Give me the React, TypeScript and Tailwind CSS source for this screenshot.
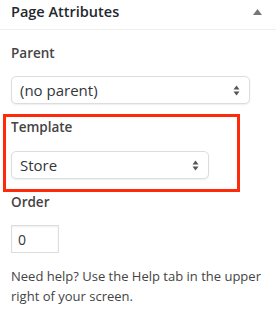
import React from "react";

function Arrows() {
  return (
    <svg width="7" height="11" viewBox="0 0 7 11" className="shrink-0">
      <path d="M3.5 0.5 L6.5 4.5 L0.5 4.5 Z" fill="#555" />
      <path d="M3.5 10.5 L6.5 6.5 L0.5 6.5 Z" fill="#555" />
    </svg>
  );
}

function Select({ label, width }: { label: string; width: string }) {
  return (
    <div
      className={`${width} h-[28px] flex items-center justify-between pl-[8px] pr-[9px] border border-[#dddddd] rounded-[5px] bg-white shadow-[0_1px_2px_rgba(0,0,0,0.07)] text-[15px] text-[#32373c]`}
    >
      <span>{label}</span>
      <Arrows />
    </div>
  );
}

export default function App() {
  return (
    <div
      className="w-[276px] h-[317px] bg-white text-[#23282d] overflow-hidden"
      style={{ fontFamily: '"Open Sans", sans-serif' }}
    >
      <div className="h-[30px] border-b border-[#eeeeee] flex items-center justify-between pl-[11px] pr-[14px]">
        <h2 className="text-[14.5px] font-semibold leading-none -mt-[5px]">Page Attributes</h2>
        <svg width="9" height="6" viewBox="0 0 9 6" className="-mt-[6px]">
          <path d="M4.5 0 L9 6 L0 6 Z" fill="#777" />
        </svg>
      </div>

      <div className="pl-[11px] pt-[14px]">
        <p className="text-[13.5px] font-semibold text-[#444] leading-[18px]">Parent</p>
        <div className="mt-[14px]">
          <Select label="(no parent)" width="w-[239px]" />
        </div>
      </div>

      <div className="ml-[3px] mt-[10px] w-[237px] h-[78px] border-[3px] border-[#ff2a0a] pl-[5px] pt-[1px]">
        <p className="text-[13.5px] font-semibold text-[#444] leading-[18px]">Template</p>
        <div className="mt-[15px]">
          <Select label="Store" width="w-[198px]" />
        </div>
      </div>

      <div className="pl-[11px] pt-[1px]">
        <p className="text-[13.5px] font-semibold text-[#444] leading-[18px]">Order</p>
        <div className="mt-[14px] w-[48px] h-[28px] border border-[#dddddd] bg-white shadow-[inset_0_1px_2px_rgba(0,0,0,0.07)] flex items-center pl-[6px] text-[14px] text-[#32373c]">
          0
        </div>
        <p className="mt-[13px] text-[13px] leading-[20px] text-[#444]">
          Need help? Use the Help tab in the upper right of your screen.
        </p>
      </div>
    </div>
  );
}
